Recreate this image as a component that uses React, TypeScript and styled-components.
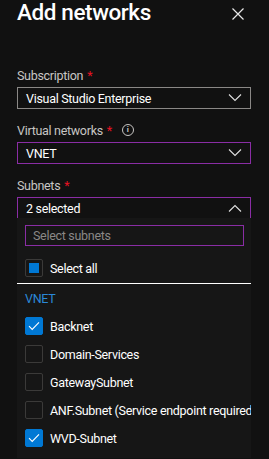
import React, { FC } from 'react';
import styled, { createGlobalStyle } from 'styled-components';

const GlobalStyle = createGlobalStyle`
  html, body {
    margin: 0;
    padding: 0;
    background: #111111;
  }
  body {
    font-family: 'Roboto', 'Liberation Sans', sans-serif;
    color: #ffffff;
  }
`;

const BORDER = '#8a8886';
const PURPLE = '#8a2da5';
const BLUE = '#0078d4';
const TEXT_SIZE = '12.5px';
const TRACKING = '-0.3px';

type Subnet = { name: string; checked: boolean };

const subnets: Subnet[] = [
  { name: 'Backnet', checked: true },
  { name: 'Domain-Services', checked: false },
  { name: 'GatewaySubnet', checked: false },
  { name: 'ANF.Subnet (Service endpoint required)', checked: false },
  { name: 'WVD-Subnet', checked: true },
];

const Chevron: FC<{ up?: boolean }> = ({ up }) => (
  <svg width="14" height="8" viewBox="0 0 14 8" fill="none">
    <path
      d={up ? 'M1 7.5 L7 1.5 L13 7.5' : 'M1 0.5 L7 6.5 L13 0.5'}
      stroke="#e0e0e0"
      strokeWidth="1.1"
    />
  </svg>
);

const CheckMark = () => (
  <svg width="12" height="10" viewBox="0 0 12 10" fill="none">
    <path d="M1 5.2 L4.2 8.4 L11 1.4" stroke="#ffffff" strokeWidth="1.1" />
  </svg>
);

export default function App() {
  return (
    <Page>
      <GlobalStyle />
      <Header>
        <Title>Add networks</Title>
        <Close aria-label="close">
          <svg width="12" height="12" viewBox="0 0 12 12">
            <path d="M0.5 0.5 L11.5 11.5 M11.5 0.5 L0.5 11.5" stroke="#e8e8e8" strokeWidth="1.2" />
          </svg>
        </Close>
      </Header>

      <Field>
        <Label>
          Subscription <Req>*</Req>
        </Label>
        <Select $active={false}>
          <span>Visual Studio Enterprise</span>
          <Chevron />
        </Select>
      </Field>

      <Field>
        <Label>
          Virtual networks <Req>*</Req>
          <Info>i</Info>
        </Label>
        <Select $active>
          <span>VNET</span>
          <Chevron />
        </Select>
      </Field>

      <Field $last>
        <Label>
          Subnets <Req>*</Req>
        </Label>
        <Select $active>
          <span>2 selected</span>
          <Chevron up />
        </Select>
        <Dropdown>
          <Search placeholder="Select subnets" />
          <Option $gap={8}>
            <Box $checked={false}>
              <Partial />
            </Box>
            <OptionText>Select all</OptionText>
          </Option>
          <Divider />
          <Group>VNET</Group>
          {subnets.map((s) => (
            <Option key={s.name}>
              <Box $checked={s.checked}>{s.checked && <CheckMark />}</Box>
              <OptionText>{s.name}</OptionText>
            </Option>
          ))}
        </Dropdown>
      </Field>
    </Page>
  );
}

const Page = styled.div`
  width: 269px;
  height: 459px;
  padding: 0 18px 0 17px;
  box-sizing: border-box;
  overflow: hidden;
  letter-spacing: ${TRACKING};
`;

const Header = styled.div`
  display: flex;
  justify-content: space-between;
  align-items: flex-start;
  height: 65px;
`;

const Title = styled.h1`
  margin: 0;
  font-size: 22.5px;
  font-weight: 500;
  line-height: 24px;
  letter-spacing: -0.4px;
`;

const Close = styled.div`
  margin: 8px 7px 0 0;
  display: flex;
`;

const Field = styled.div<{ $last?: boolean }>`
  display: flex;
  flex-direction: column;
  margin-bottom: ${({ $last }) => ($last ? 0 : '11px')};
`;

const Label = styled.div`
  display: flex;
  align-items: center;
  height: 20px;
  font-size: ${TEXT_SIZE};
  color: #c8c6c4;
  margin-bottom: 2px;
`;

const Req = styled.span`
  color: #e81123;
  margin-left: 4px;
`;

const Info = styled.span`
  width: 10px;
  height: 10px;
  border: 1px solid #c8c6c4;
  border-radius: 50%;
  font-size: 8px;
  line-height: 10px;
  text-align: center;
  margin-left: 10px;
  font-weight: 700;
  letter-spacing: 0;
`;

const Select = styled.div<{ $active: boolean }>`
  display: flex;
  align-items: center;
  justify-content: space-between;
  height: 20px;
  border: 1px solid ${({ $active }) => ($active ? PURPLE : BORDER)};
  padding: 0 8px 0 8px;
  font-size: ${TEXT_SIZE};
  color: #ffffff;
`;

const Dropdown = styled.div`
  background: #161616;
  height: 233px;
  padding: 7px 6px 0 8px;
  margin-top: -1px;
  display: flex;
  flex-direction: column;
  overflow: hidden;
  white-space: nowrap;
`;

const Search = styled.input`
  height: 21px;
  box-sizing: border-box;
  width: 219px;
  background: transparent;
  border: 1px solid ${PURPLE};
  color: #ffffff;
  font-family: inherit;
  font-size: ${TEXT_SIZE};
  letter-spacing: ${TRACKING};
  padding: 0 7px;
  outline: none;
  &::placeholder {
    color: #8a8886;
  }
`;

const Option = styled.div<{ $gap?: number }>`
  display: flex;
  align-items: center;
  height: 28px;
  gap: 7px;
  margin-top: ${({ $gap }) => $gap ?? 0}px;
`;

const Box = styled.div<{ $checked: boolean }>`
  width: 18px;
  height: 18px;
  box-sizing: border-box;
  border-radius: 2px;
  display: flex;
  align-items: center;
  justify-content: center;
  flex-shrink: 0;
  background: ${({ $checked }) => ($checked ? BLUE : 'transparent')};
  border: 1px solid ${({ $checked }) => ($checked ? BLUE : '#3b3a39')};
`;

const Partial = styled.div`
  width: 10px;
  height: 10px;
  background: ${BLUE};
`;

const OptionText = styled.span`
  font-size: ${TEXT_SIZE};
  color: #ffffff;
`;

const Divider = styled.div`
  height: 1px;
  background: #ffffff;
  margin: 1px -6px 0 -8px;
`;

const Group = styled.div`
  height: 28px;
  display: flex;
  align-items: center;
  font-size: ${TEXT_SIZE};
  color: #2b88d8;
`;
